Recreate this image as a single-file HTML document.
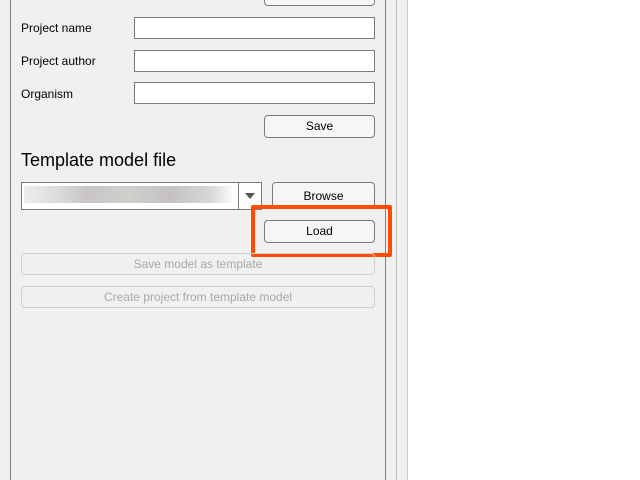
<!DOCTYPE html>
<html><head><style>
body{margin:0;width:640px;height:480px;background:#fff;position:relative;overflow:hidden;font-family:"Liberation Sans",Arial,sans-serif;font-size:12px;color:#000}
.a{position:absolute}
.bg{left:0;top:0;width:408px;height:480px;background:#f0f0f0}
.l{top:0;height:480px;width:1px}
.lbl{left:21px}
.in{left:134px;width:239px;height:20px;background:#fff;border:1px solid #7a7a7a}
.btn{border:1px solid #7a7a7a;border-radius:4px;background:#f6f6f6;text-align:center;box-sizing:border-box}
.dis{border:1px solid #cfcfcf;border-radius:4px;color:#a8a8a8;text-align:center;box-sizing:border-box;left:21px;width:354px;height:22px;line-height:20px}
</style></head><body>
<div class="a bg"></div>
<div class="a l" style="left:10px;background:#808080"></div>
<div class="a l" style="left:385px;background:#808080"></div>
<div class="a l" style="left:396px;background:#bdbdbd"></div>
<div class="a l" style="left:407px;background:#c8c8c8"></div>
<div class="a btn" style="left:264px;top:-16px;width:111px;height:22px"></div>
<div class="a lbl" style="top:21px">Project name</div>
<div class="a in" style="top:17px"></div>
<div class="a lbl" style="top:54px">Project author</div>
<div class="a in" style="top:50px"></div>
<div class="a lbl" style="top:87px">Organism</div>
<div class="a in" style="top:82px"></div>
<div class="a btn" style="left:264px;top:115px;width:111px;height:23px;line-height:21px">Save</div>
<div class="a" style="left:21px;top:150px;font-size:18px">Template model file</div>
<div class="a" style="left:21px;top:182px;width:239px;height:26px;background:#fff;border:1px solid #7a7a7a"></div>
<div class="a" style="left:24px;top:186px;width:208px;height:17px;background:linear-gradient(90deg,#eee,#ddd 15%,#c8c4c8 30%,#d0d0cc 50%,#c4c0c4 70%,#d8d8d8 90%,#fafafa)"></div>
<div class="a" style="left:238px;top:183px;width:1px;height:26px;background:#7a7a7a"></div>
<div class="a" style="left:245px;top:193px;width:0;height:0;border-left:5px solid transparent;border-right:5px solid transparent;border-top:6px solid #555"></div>
<div class="a btn" style="left:272px;top:182px;width:103px;height:26px;line-height:26px">Browse</div>
<div class="a btn" style="left:264px;top:220px;width:111px;height:23px;line-height:21px">Load</div>
<div class="a" style="left:251px;top:205px;width:141px;height:52px;border:4px solid #ff4b00;box-sizing:border-box;border-radius:2px"></div>
<div class="a dis" style="top:253px">Save model as template</div>
<div class="a dis" style="top:286px">Create project from template model</div>
</body></html>
